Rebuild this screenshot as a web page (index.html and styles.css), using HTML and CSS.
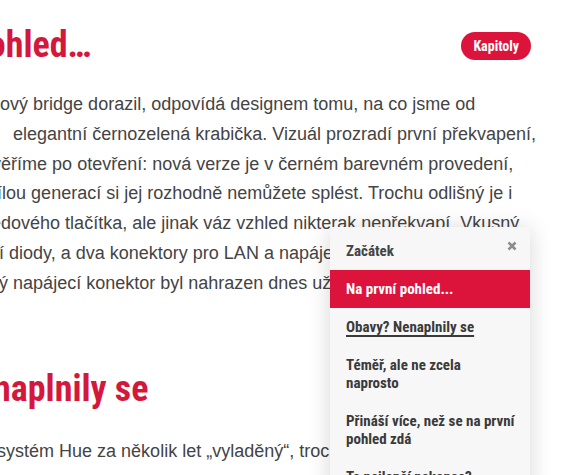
FILE: index.html
```html
<!DOCTYPE html>
<html lang="cs">
<head>
<meta charset="utf-8">
<title>Recenze</title>
<link rel="stylesheet" href="styles.css">
</head>
<body>
<div class="page">
  <article class="article">
    <div class="title-row">
      <h2 class="title title-first">Na první pohled…</h2>
      <button class="chapters" type="button">Kapitoly</button>
    </div>
    <p class="text">Krabička, ve které nový bridge dorazil, odpovídá designem tomu, na co jsme od<br>Philipsu zvyklí. Jde&nbsp;&nbsp;&nbsp; elegantní černozelená krabička. Vizuál prozradí první překvapení,<br>ale které si ihned ověříme po otevření: nová verze je v černém barevném provedení,<br>takže s předchozí bílou generací si jej rozhodně nemůžete splést. Trochu odlišný je i<br>barva a velikost středového tlačítka, ale jinak váz vzhled nikterak nepřekvapí. Vkusný<br>dojem tvoří kontrolní diody, a dva konektory pro LAN a napájecí kabel.<br>Navíc původní kulatý napájecí konektor byl nahrazen dnes už běžným USB-C.</p>
    <h2 class="title title-second">Obavy? Nenaplnily se</h2>
    <p class="text text-second">Ale Philips má svůj systém Hue za několik let „vyladěný“, trochu jsem se bál.<br>Jsme ale rádi, že stěží bychom mu mohli cokoliv vytknout, a oficiální.</p>
  </article>

  <nav class="toc">
    <div class="toc-head">
      <span class="toc-title">Začátek</span>
      <button class="toc-close" type="button" aria-label="Zavřít">
        <svg width="10" height="10" viewBox="0 0 10 10"><path d="M1.5 1.5 L8.5 8.5 M8.5 1.5 L1.5 8.5" stroke="#8c8c8c" stroke-width="2.6" stroke-linecap="butt"/></svg>
      </button>
    </div>
    <ul class="toc-list">
      <li class="toc-item toc-item-active"><a href="#">Na první pohled...</a></li>
      <li class="toc-item"><a href="#" class="toc-link-current">Obavy? Nenaplnily se</a></li>
      <li class="toc-item"><a href="#">Téměř, ale ne zcela naprosto</a></li>
      <li class="toc-item"><a href="#">Přináší více, než se na první pohled zdá</a></li>
      <li class="toc-item"><a href="#">To nejlepší nakonec?</a></li>
    </ul>
  </nav>
</div>
</body>
</html>
```
FILE: styles.css
```css
html, body {
  margin: 0;
  padding: 0;
  background: #ffffff;
  overflow: hidden;
}

.page {
  position: relative;
  width: 582px;
  height: 475px;
  overflow: hidden;
  padding-top: 24px;
  box-sizing: border-box;
}

.article {
  width: 690px;
  margin-left: -159px;
}

.title-row {
  display: flex;
  justify-content: space-between;
  align-items: center;
}

.title {
  margin: 0;
  font-family: "Roboto", "Liberation Sans", sans-serif;
  font-stretch: 75%;
  font-weight: 700;
  font-size: 36px;
  line-height: 43px;
  color: #d4173c;
  white-space: nowrap;
}

.title-second {
  margin-top: 69px;
}

.chapters {
  height: 28px;
  padding: 0 12px;
  border: none;
  border-radius: 14px;
  background: #dc143c;
  color: #ffffff;
  font-family: "Roboto", sans-serif;
  font-stretch: 75%;
  font-weight: 700;
  font-size: 14px;
  line-height: 28px;
}

.text {
  margin: 23px 0 0;
  font-family: "Liberation Sans", Arial, sans-serif;
  font-size: 18px;
  line-height: 29.8px;
  color: #444444;
  white-space: nowrap;
}

.text-second {
  margin-top: 25px;
  line-height: 31px;
}

.toc {
  position: absolute;
  left: 330px;
  top: 227px;
  width: 200px;
  background: #f7f7f7;
  box-shadow: 0 2px 22px rgba(0, 0, 0, 0.16);
  font-family: "Roboto", sans-serif;
  font-stretch: 75%;
  font-weight: 700;
  font-size: 15px;
  line-height: 18px;
  color: #3a3a3a;
}

.toc-head {
  display: flex;
  justify-content: space-between;
  align-items: flex-start;
  padding: 15px 13px 10px 16px;
}

.toc-title {
  color: #444444;
}

.toc-close {
  border: none;
  background: none;
  padding: 0;
  margin-top: -1px;
  width: 10px;
  height: 10px;
  display: flex;
}

.toc-list {
  list-style: none;
  margin: 0;
  padding: 0;
}

.toc-item a {
  display: block;
  padding: 10px 15px 10px 16px;
  color: #3a3a3a;
  text-decoration: none;
}

.toc-item-active a {
  background: #dc143c;
  color: #ffffff;
}

.toc-item a.toc-link-current {
  text-decoration: underline;
  text-decoration-thickness: 1.5px;
  text-underline-offset: 3px;
}
```
